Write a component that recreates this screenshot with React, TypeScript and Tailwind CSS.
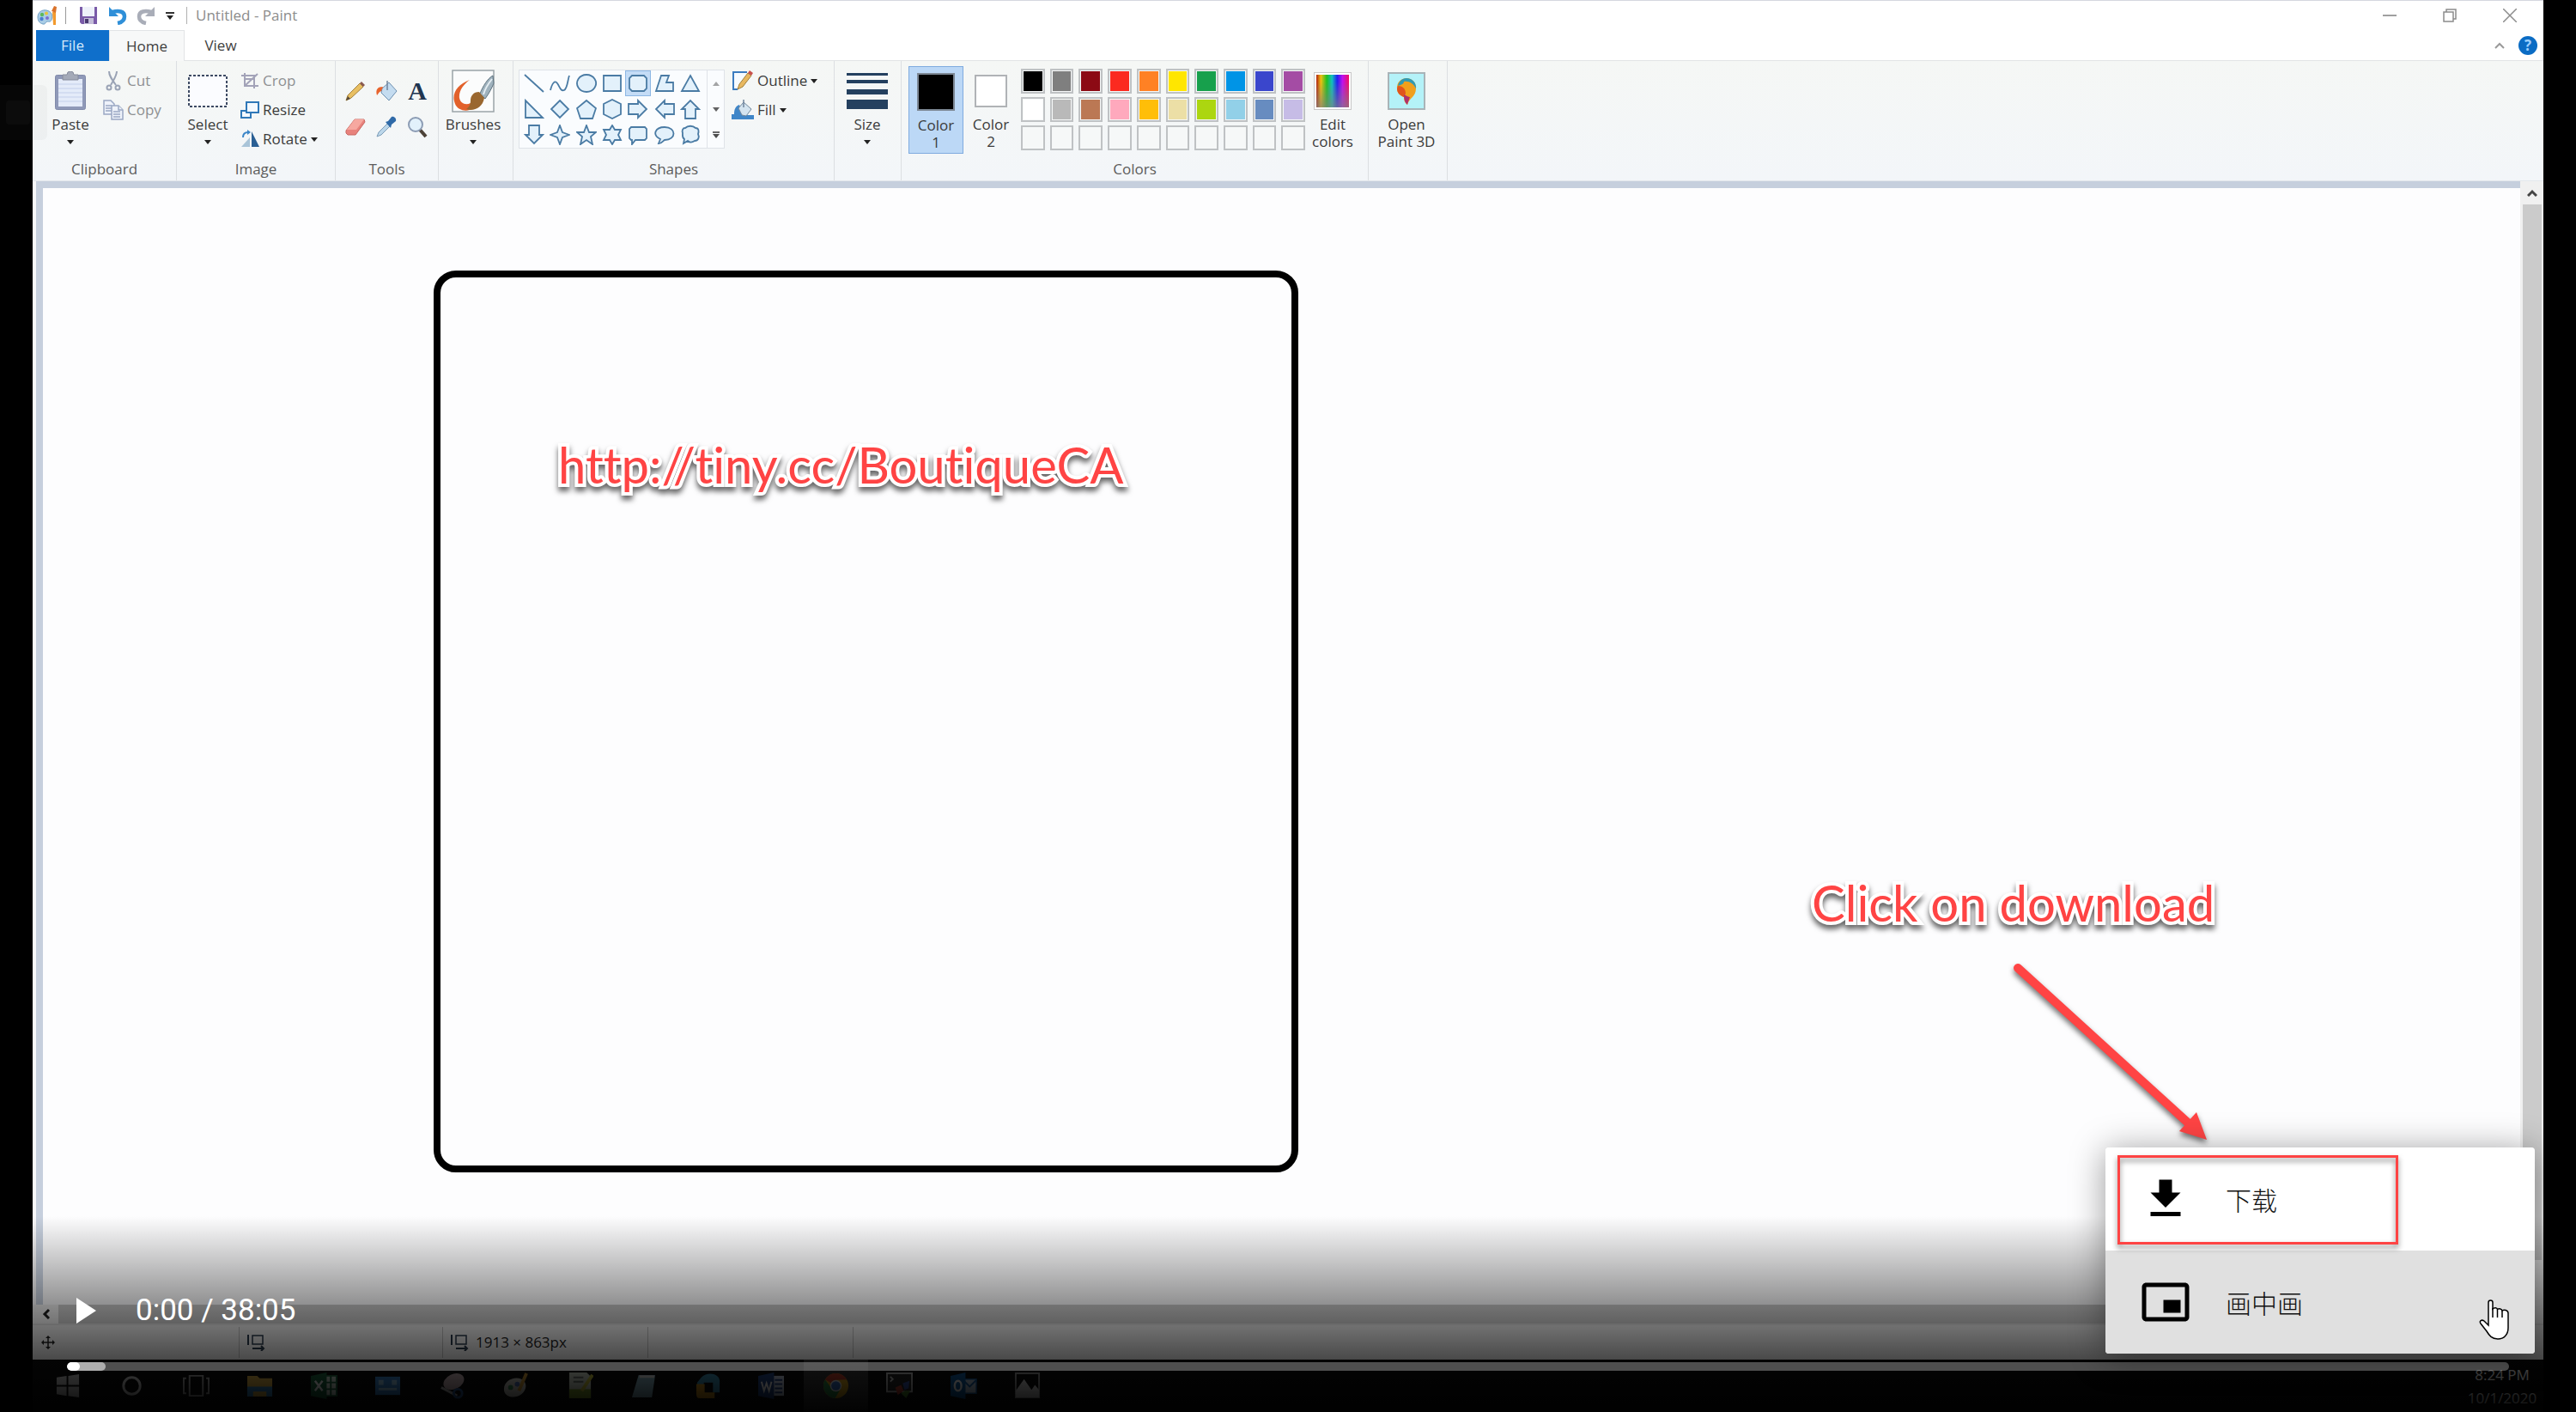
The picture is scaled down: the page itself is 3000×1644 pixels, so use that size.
import type { ReactNode } from "react";

const uiFont = 'font-["Open_Sans","Noto_Sans",sans-serif]';

/* ---------- small helpers ---------- */

function Caret() {
  return (
    <svg viewBox="0 0 8 5" className="h-[5px] w-2 shrink-0" aria-hidden="true">
      <path d="M0 0h8L4 5z" fill="#222" />
    </svg>
  );
}

function Group({ label, className, inset = "", children }: { label?: string; className: string; inset?: string; children: ReactNode }) {
  return (
    <section aria-label={label} className={`flex shrink-0 flex-col border-r border-[#dcdfe2] pt-1.5 ${className}`}>
      <div className={`flex h-[102px] items-start ${inset}`}>{children}</div>
      <div className="mt-1.5 text-center text-[17px] leading-6 text-[#5c5c5c]">{label}</div>
    </section>
  );
}

function BigButton({
  icon,
  label,
  second,
  className = "",
}: {
  icon: ReactNode;
  label: string;
  second?: string;
  className?: string;
}) {
  return (
    <button type="button" className={`flex h-[102px] flex-col items-center text-[17px] leading-5 text-[#3b3b3b] ${className}`}>
      <span className="flex h-[58px] items-center justify-center">{icon}</span>
      <span>{label}</span>
      {second ? <span className="whitespace-nowrap">{second}</span> : <span className="flex h-5 items-center"><Caret /></span>}
    </button>
  );
}

function SmallButton({ icon, label, muted, caret }: { icon: ReactNode; label: string; muted?: boolean; caret?: boolean }) {
  return (
    <button
      type="button"
      className={`flex h-[34px] items-center gap-1 text-[17px] leading-5 ${muted ? "text-[#8e9092]" : "text-[#3b3b3b]"}`}
    >
      {icon}
      <span>{label}</span>
      {caret && <Caret />}
    </button>
  );
}

/* ---------- title bar icons ---------- */

function PaintLogo() {
  return (
    <svg viewBox="0 0 26 26" className="size-[26px]" aria-hidden="true">
      <path d="M2 15c0-6 5-9 10-8 6 1 8 6 6 11-1 3-3 2-5 2s-2 4-5 3c-4-1-6-4-6-8z" fill="#a9cde6" stroke="#6f9fc4" />
      <circle cx="7" cy="12" r="2.2" fill="#5cb85c" />
      <circle cx="12" cy="10.500" r="2" fill="#e8c33c" />
      <circle cx="6.500" cy="17" r="2.200" fill="#4a7fd0" />
      <circle cx="13" cy="16" r="2" fill="#7c6fd0" />
      <path d="M19 9h4v15h-3z" fill="#f29a2e" />
      <path d="M18 8l3-6 3 1-1 7z" fill="#d9722a" />
    </svg>
  );
}

function SaveIcon() {
  return (
    <svg viewBox="0 0 22 22" className="size-[22px]" aria-hidden="true">
      <path d="M1 1h20v20H3l-2-2z" fill="#7a5ba8" />
      <path d="M4 1h14v11H4z" fill="#eef1fa" />
      <path d="M6 14h11v7H6z" fill="#c3bcd8" />
      <path d="M7 15h4v5H7z" fill="#4a3a70" />
    </svg>
  );
}

function UndoIcon({ color, flip }: { color: string; flip?: boolean }) {
  return (
    <svg viewBox="0 0 22 22" className="size-[22px]" aria-hidden="true">
      <g transform={flip ? "matrix(-1 0 0 1 22 0)" : undefined} fill="none" stroke={color}>
        <path d="M5 7c7-2 14-1 14 5 0 4-3 7-8 8" strokeWidth="4.500" />
        <path d="M1 1v11h11z" fill={color} stroke="none" />
      </g>
    </svg>
  );
}

/* ---------- ribbon icons ---------- */

function PasteIcon() {
  return (
    <svg viewBox="0 0 38 46" className="h-[46px] w-[38px]" aria-hidden="true">
      <rect x="1.500" y="4.500" width="35" height="40" rx="2" fill="#8f99b8" stroke="#808aaa" />
      <rect x="5" y="9" width="28" height="32" fill="#e4ebf9" />
      <path d="M5 15h28M5 20h28M5 25h28M5 30h28M5 35h28" stroke="#c3cfea" />
      <path d="M10 4h5a4 4 0 0 1 8 0h5v6H10z" fill="#a4aab8" stroke="#868c9c" />
    </svg>
  );
}

function CutIcon() {
  return (
    <svg viewBox="0 0 24 24" className="size-6" fill="none" stroke="#9aa3b5" strokeWidth="2" aria-hidden="true">
      <path d="M7 1c0 5 3 9 8 16M16 1c0 5-3 9-7 16" />
      <circle cx="7" cy="20" r="2.500" />
      <circle cx="17" cy="20" r="2.500" />
    </svg>
  );
}

function CopyIcon() {
  return (
    <svg viewBox="0 0 24 24" className="size-6" fill="#eef2fa" stroke="#9aa8c4" strokeWidth="1.500" aria-hidden="true">
      <path d="M1 1h8l4 4v12H1z" />
      <path d="M3 7h7M3 10h7M3 13h7" />
      <path d="M10 7h8l5 5v11H10z" />
      <path d="M12 14h8M12 17h8M12 20h8M18 7v5h5" />
    </svg>
  );
}

function SelectIcon() {
  return (
    <svg viewBox="0 0 48 40" className="h-10 w-12" aria-hidden="true">
      <rect x="2" y="2" width="44" height="36" fill="#fbfcff" stroke="#3d4a63" strokeWidth="2" strokeDasharray="3 2" />
    </svg>
  );
}

function CropIcon() {
  return (
    <svg viewBox="0 0 22 22" className="size-[22px]" fill="none" stroke="#a3a3b8" strokeWidth="2" aria-hidden="true">
      <path d="M1 5h17M5 9h11M5 2v15h16M5 17L20 3M16 5v15" />
    </svg>
  );
}

function ResizeIcon() {
  return (
    <svg viewBox="0 0 22 22" className="size-[22px]" fill="#f4f9ff" stroke="#2f78b8" strokeWidth="2" aria-hidden="true">
      <path d="M1 12h11v8H1z" />
      <path d="M7 2h14v12H7z" />
    </svg>
  );
}

function RotateIcon() {
  return (
    <svg viewBox="0 0 22 22" className="size-[22px]" aria-hidden="true">
      <path d="M13 2v18h9z" fill="#2a5f94" />
      <path d="M11 9v11H1z" fill="#a9c4d8" />
      <path d="M3 9c0-4 2-6 6-6" fill="none" stroke="#3b86c8" strokeWidth="2" />
      <path d="M8 0l4 3-4 3z" fill="#3b86c8" />
    </svg>
  );
}

function PencilIcon() {
  return (
    <svg viewBox="0 0 26 26" className="size-[26px]" aria-hidden="true">
      <path d="M2 24l2-6L18 4l4 4L8 21z" fill="#e8bf62" stroke="#a4813e" />
      <path d="M18 4l2-2 4 4-2 2z" fill="#8a5a50" />
      <path d="M2 24l2-5 3 3z" fill="#574a3a" />
    </svg>
  );
}

function BucketIcon() {
  return (
    <svg viewBox="0 0 26 26" className="size-[26px]" aria-hidden="true">
      <path d="M8 10l8-7 9 10-9 11-9-9z" fill="#c4dcf0" stroke="#6c8fb0" />
      <path d="M14 1v11" stroke="#70859c" strokeWidth="1.500" />
      <path d="M9 8c-6 0-9 3-7 10 2-2 2-4 5-5z" fill="#e8632c" />
    </svg>
  );
}

function LetterIcon() {
  return <span className='w-[26px] text-center font-["Liberation_Serif",serif] text-[30px] leading-[26px] font-bold text-[#1f3550]'>A</span>;
}

function EraserIcon() {
  return (
    <svg viewBox="0 0 26 26" className="size-[26px]" aria-hidden="true">
      <path d="M2 17L12 4h11l1 3-11 15H4l-2-2z" fill="#e8827c" stroke="#c86862" />
      <path d="M12 4h11l-9 12H3z" fill="#f6a8a0" />
    </svg>
  );
}

function PickerIcon() {
  return (
    <svg viewBox="0 0 26 26" className="size-[26px]" aria-hidden="true">
      <path d="M2 24l2-5L14 9l3 3L7 22z" fill="#bcd7ea" stroke="#7d9db8" />
      <path d="M12 7l3-1 4-5c3-1 6 2 5 5l-5 4-1 4z" fill="#2f6aa8" />
    </svg>
  );
}

function MagnifierIcon() {
  return (
    <svg viewBox="0 0 26 26" className="size-[26px]" aria-hidden="true">
      <path d="M16 16l7 8" stroke="#4c4238" strokeWidth="4" />
      <circle cx="11" cy="10" r="8" fill="#e2f1fb" stroke="#8c9cb4" strokeWidth="2" />
    </svg>
  );
}

function BrushesIcon() {
  return (
    <svg viewBox="0 0 50 50" className="size-[50px]" aria-hidden="true">
      <rect x="1" y="1" width="48" height="48" fill="#fbfcfc" stroke="#9aa4a8" strokeWidth="1.500" />
      <path d="M21 12C7 17-1 28 4 40c3 8 15 10 20 5l-2-6c-6 3-12 0-13-6C8 25 14 17 21 12z" fill="#e2612b" />
      <path d="M48 7c-6 3-12 13-15 21l6 6c5-7 8-13 10-18z" fill="#9fb2bd" stroke="#5f7480" />
      <path d="M32 26c-7 0-10 5-10 10s-2 8-5 10c8 3 19-1 21-13z" fill="#9a672f" />
      <path d="M47 11c-4 5-8 11-10 18" stroke="#e4edf2" strokeWidth="2" fill="none" />
    </svg>
  );
}

const shapes: { name: string; d: string }[] = [
  { name: "Line", d: "M1 2L23 22" },
  { name: "Curve", d: "M1 20C3 12 6 8 9 12s4 10 8 8S21 8 23 3" },
  { name: "Oval", d: "M12 2a11 10 0 1 0 .1 0z" },
  { name: "Rectangle", d: "M2 3h20v18H2z" },
  { name: "Rounded rectangle", d: "M5 3h14l3 3v12l-3 3H5l-3-3V6z" },
  { name: "Polygon", d: "M8 3h9l-3 8h8v10H2z" },
  { name: "Triangle", d: "M12 3l10 18H2z" },
  { name: "Right triangle", d: "M2 2v20h20z" },
  { name: "Diamond", d: "M12 2l10 10-10 10L2 12z" },
  { name: "Pentagon", d: "M12 2l11 9-4 12H5L1 11z" },
  { name: "Hexagon", d: "M12 1l10 5v12l-10 5L2 18V6z" },
  { name: "Right arrow", d: "M1 6h11V2l10 10-10 10v-4H1z" },
  { name: "Left arrow", d: "M23 6H12V2L2 12l10 10v-4h11z" },
  { name: "Up arrow", d: "M6 23V12H2L12 2l10 10h-4v11z" },
  { name: "Down arrow", d: "M6 1v11H2l10 10 10-10h-4V1z" },
  { name: "Four-point star", d: "M12 1l3 8 8 3-8 3-3 8-3-8-8-3 8-3z" },
  { name: "Five-point star", d: "M12 1l3 8h8l-6 5 2 9-7-5-7 5 2-9-6-5h8z" },
  { name: "Six-point star", d: "M12 1l3 5h7l-3 6 3 6h-7l-3 5-3-5H2l3-6-3-6h7z" },
  { name: "Rounded callout", d: "M4 3h16l2 2v11l-2 2H9l-4 5v-5H4l-2-2V5z" },
  { name: "Oval callout", d: "M12 3c14 0 14 15 0 15-1 0-3 4-7 4l2-5C-3 12 1 3 12 3z" },
  { name: "Cloud callout", d: "M6 4c3-3 9-3 12 0 4 0 4 4 3 7 2 4 0 8-4 8-3 2-6 2-8 0l-5 3 1-5c-3-2-2-5-2-7-1-3 0-6 3-6z" },
];

function ShapesGallery() {
  return (
    <div className="mt-1 flex h-[92px] border border-[#dfe3e8] bg-[#fafcfe]">
      <div className="grid w-[218px] grid-cols-7 grid-rows-3 pr-1 pl-0.5">
        {shapes.map((s, i) => (
          <button
            key={s.name}
            type="button"
            aria-label={s.name}
            className={`flex items-center justify-center border ${i === 4 ? "border-[#8db7e4] bg-[#c4dcf6]" : "border-transparent"}`}
          >
            <svg viewBox="0 0 24 24" className="size-[24px]" fill={i < 2 ? "none" : "#e3f1fb"} stroke="#4a7ba4" strokeWidth="1.800">
              <path d={s.d} />
            </svg>
          </button>
        ))}
      </div>
      <div className="grid w-5 grid-rows-3 border-l border-[#dfe3e8]">
        <button type="button" aria-label="Scroll shapes up" className="flex items-center justify-center opacity-40">
          <svg viewBox="0 0 8 5" className="h-[5px] w-2"><path d="M0 5h8L4 0z" fill="#222" /></svg>
        </button>
        <button type="button" aria-label="Scroll shapes down" className="flex items-center justify-center opacity-70">
          <Caret />
        </button>
        <button type="button" aria-label="More shapes" className="flex flex-col items-center justify-center gap-px opacity-80">
          <span className="h-0.5 w-2 bg-[#444]" />
          <Caret />
        </button>
      </div>
    </div>
  );
}

function OutlineIcon() {
  return (
    <svg viewBox="0 0 26 26" className="size-[26px]" aria-hidden="true">
      <path d="M18 3H2v20h5" fill="#f7fbff" stroke="#3c7cc0" strokeWidth="2" />
      <path d="M7 23l2-6L19 4l4 3L13 20z" fill="#e8b860" stroke="#a0803c" />
      <path d="M19 4l2-3 4 3-2 3z" fill="#c8504c" />
    </svg>
  );
}

function FillIcon() {
  return (
    <svg viewBox="0 0 26 26" className="size-[26px]" aria-hidden="true">
      <path d="M9 7c-5 2-6 6-6 11H0v6h26v-5H14z" fill="#3f86c8" />
      <path d="M8 11l6-7 9 8-6 8-5-1z" fill="#d4e4f0" stroke="#70879c" />
      <path d="M14 1v9" stroke="#70859c" strokeWidth="1.500" />
    </svg>
  );
}

const palette = [
  "#000000", "#7f7f7f", "#8c0a14", "#fb2a20", "#ff8124", "#ffe600", "#17a04c", "#0094e6", "#3a46cc", "#a44ca4",
  "#ffffff", "#b9b9b9", "#bb7854", "#ffa9bd", "#ffbe08", "#ecdfa6", "#acd610", "#92d0e8", "#678cc0", "#c6bce6",
];

function Palette() {
  return (
    <div className="mt-[3px] grid w-[331px] grid-cols-10 gap-x-1.5 gap-y-1">
      {Array.from({ length: 30 }, (_, i) => (
        <button
          key={i}
          type="button"
          aria-label={`Color swatch ${i + 1}`}
          className="h-[29px] border-2 border-[#bfc2c4] bg-[#f6f8f8] p-px"
        >
          {palette[i] && <span className="block size-full" style={{ backgroundColor: palette[i] }} />}
        </button>
      ))}
    </div>
  );
}

function RainbowIcon() {
  return (
    <span className="block size-[44px] border border-[#c8c8c8] bg-white p-0.5">
      <span className="block size-full bg-[linear-gradient(to_top,rgba(128,128,128,.7),transparent_80%),linear-gradient(to_right,#b02010,#f0c010_14%,#20c020_32%,#10c0c0_48%,#2020f0_64%,#c010f0_80%,#f01060)]" />
    </span>
  );
}

function Paint3DIcon() {
  return (
    <svg viewBox="0 0 44 44" className="size-[44px]" aria-hidden="true">
      <rect x="1" y="1" width="42" height="42" fill="#b4f2f8" stroke="#a9b4b8" strokeWidth="2" />
      <path d="M22 7a11 11 0 0 1 11 12c0 10-8 11-10 19-3-2-4-5-4-9-5-2-8-5-8-10A11 11 0 0 1 22 7z" fill="#f0a01c" />
      <path d="M22 7a11 11 0 0 1 11 12c-3-6-8-9-14-8 0 3-4 4-7 5 1-5 5-9 10-9z" fill="#2f9ab4" />
      <path d="M12 16c5 0 9 3 9 9l-2 4c-5-2-8-5-8-10z" fill="#e0541e" />
      <path d="M19 26c3 2 6 3 7 3-1 3-2 5-3 9-3-3-4-6-4-12z" fill="#b0306c" />
    </svg>
  );
}

/* ---------- Paint window ---------- */

function TitleBar() {
  return (
    <header className="flex h-[34px] shrink-0 items-center bg-white pl-1 text-[#8c8c8c]">
      <PaintLogo />
      <span className="mr-[15px] ml-2 h-5 w-px bg-[#9a9a9a]" />
      <button type="button" aria-label="Save"><SaveIcon /></button>
      <button type="button" aria-label="Undo" className="ml-3"><UndoIcon color="#2f8fd8" /></button>
      <button type="button" aria-label="Redo" className="ml-[11px]"><UndoIcon color="#a9adb8" flip /></button>
      <button type="button" aria-label="Customize toolbar" className="ml-3 flex flex-col items-center gap-0.5">
        <span className="h-0.5 w-2.5 bg-[#333]" />
        <Caret />
      </button>
      <span className="mr-2.5 ml-3.5 h-5 w-px bg-[#b0b0b0]" />
      <h1 className="text-[17px] leading-6">Untitled - Paint</h1>
      <div className="ml-auto flex items-center gap-[54px] pr-[31px]">
        <button type="button" aria-label="Minimize" className="h-0.5 w-4 bg-[#a0a0a0]" />
        <button type="button" aria-label="Restore">
          <svg viewBox="0 0 16 16" className="size-4" fill="none" stroke="#8c8c8c" strokeWidth="1.500">
            <path d="M1 4h11v11H1zM4 4V1h11v11h-3" />
          </svg>
        </button>
        <button type="button" aria-label="Close">
          <svg viewBox="0 0 16 16" className="size-4" stroke="#8c8c8c" strokeWidth="1.500">
            <path d="M0 0l16 16M16 0L0 16" />
          </svg>
        </button>
      </div>
    </header>
  );
}

function Tabs() {
  return (
    <nav className="flex h-9 shrink-0 bg-white pl-1 text-[17px] leading-6 text-[#3f3f3f]">
      <button type="button" className="w-[85px] bg-[#0f6fcb] text-[#d6e9fa]">File</button>
      <button type="button" className="w-[88px] border-x border-t border-[#e2e4e6] bg-[#f7f8f8]">Home</button>
      <button type="button" className="w-[84px] border-b border-[#e2e4e6]">View</button>
      <div className="flex grow items-center justify-end gap-4 border-b border-[#e2e4e6] pr-[7px]">
        <button type="button" aria-label="Collapse ribbon">
          <svg viewBox="0 0 12 8" className="h-2 w-3" fill="none" stroke="#9a9a9a" strokeWidth="2"><path d="M1 7l5-5 5 5" /></svg>
        </button>
        <button type="button" aria-label="Help" className="size-[22px] rounded-full bg-[#0b6cc4] text-[17px] leading-[22px] font-bold text-[#9fd0ff]">?</button>
      </div>
    </nav>
  );
}

function Ribbon() {
  return (
    <div className="flex h-[140px] shrink-0 border-b border-[#e3e7ec] bg-linear-to-b from-[#f5f7f5] to-[#f3f6f9]">
      <Group label="Clipboard" className="w-[168px]" inset="pl-4">
        <BigButton className="w-14" icon={<PasteIcon />} label="Paste" />
        <div className="ml-2.5 flex flex-col items-start">
          <SmallButton muted icon={<CutIcon />} label="Cut" />
          <SmallButton muted icon={<CopyIcon />} label="Copy" />
        </div>
      </Group>
      <Group label="Image" className="w-[185px]" inset="pl-2">
        <BigButton className="w-14" icon={<SelectIcon />} label="Select" />
        <div className="ml-2.5 flex flex-col items-start">
          <SmallButton muted icon={<CropIcon />} label="Crop" />
          <SmallButton icon={<ResizeIcon />} label="Resize" />
          <SmallButton caret icon={<RotateIcon />} label="Rotate" />
        </div>
      </Group>
      <Group label="Tools" className="w-[120px]" inset="pl-2.5">
        <div className="grid grid-cols-3 gap-x-2.5 gap-y-4 pt-4">
          <button type="button" aria-label="Pencil"><PencilIcon /></button>
          <button type="button" aria-label="Fill with color"><BucketIcon /></button>
          <button type="button" aria-label="Text" className="flex"><LetterIcon /></button>
          <button type="button" aria-label="Eraser"><EraserIcon /></button>
          <button type="button" aria-label="Color picker"><PickerIcon /></button>
          <button type="button" aria-label="Magnifier"><MagnifierIcon /></button>
        </div>
      </Group>
      <Group className="w-[87px]" inset="pl-0.5">
        <BigButton className="w-[76px]" icon={<BrushesIcon />} label="Brushes" />
      </Group>
      <Group label="Shapes" className="w-[374px]" inset="pl-1.5">
        <ShapesGallery />
        <div className="ml-2 flex flex-col items-start">
          <SmallButton caret icon={<OutlineIcon />} label="Outline" />
          <SmallButton caret icon={<FillIcon />} label="Fill" />
        </div>
      </Group>
      <Group className="w-[78px]">
        <BigButton
          className="w-[76px]"
          icon={
            <svg viewBox="0 0 48 42" className="h-[42px] w-12" fill="#24405f" aria-hidden="true">
              <path d="M0 0h48v3H0zM0 8h48v4H0zM0 19h48v6H0zM0 31h48v11H0z" />
            </svg>
          }
          label="Size"
        />
      </Group>
      <Group label="Colors" className="w-[544px]" inset="pl-2">
        <BigButton
          className="w-16 border border-[#7fabdf] bg-[#bcd8f6]"
          icon={<span className="size-[44px] border-2 border-[#7d8894] bg-black" />}
          label="Color"
          second="1"
        />
        <BigButton
          className="w-16"
          icon={<span className="h-[38px] w-[38px] border-2 border-[#b0b3b6] bg-white" />}
          label="Color"
          second="2"
        />
        <div className="ml-[3px]"><Palette /></div>
        <BigButton className="ml-0.5 w-[60px]" icon={<RainbowIcon />} label="Edit" second="colors" />
      </Group>
      <Group className="w-[92px]" inset="pl-0.5">
        <BigButton className="w-[84px]" icon={<Paint3DIcon />} label="Open" second="Paint 3D" />
      </Group>
    </div>
  );
}

const captionText =
  'absolute font-["Lato",sans-serif] text-[58px] leading-[70px] whitespace-nowrap text-[#ff4444] [font-variant-ligatures:none] [paint-order:stroke_fill] [-webkit-text-stroke:8px_white] drop-shadow-[0_5px_3px_rgba(0,0,0,.6)]';

function Canvas() {
  return (
    <div className="flex min-h-0 grow bg-[#f0f0f0]">
      <div className="relative grow border-t-[8px] border-l-[8px] border-[#c6cfdd] bg-[#fdfdfe]">
        <div className="absolute top-24 left-[455px] h-[1050px] w-[1007px] rounded-[26px] border-[8px] border-black" />
        <p className={`${captionText} top-[287px] left-[600px]`}>http://tiny.cc/BoutiqueCA</p>
        <p className={`${captionText} top-[797px] left-[2060px]`}>Click on download</p>
        <svg viewBox="0 0 240 220" className="absolute top-[898px] left-[2290px] h-[220px] w-[240px] drop-shadow-[0_4px_3px_rgba(0,0,0,.55)]" aria-hidden="true">
          <path d="M10 10L210 192" stroke="#ff4444" strokeWidth="10" strokeLinecap="round" />
          <path d="M230 210l-12-32-20 22z" fill="#ff4444" />
        </svg>
      </div>
      <div className="flex w-[27px] shrink-0 flex-col items-center pb-[52px]">
        <button type="button" aria-label="Scroll up" className="flex h-[27px] items-center">
          <svg viewBox="0 0 12 9" className="h-[9px] w-3" fill="none" stroke="#444" strokeWidth="3"><path d="M1 8l5-5 5 5" /></svg>
        </button>
        <div className="w-[22px] grow bg-[#cbcbcb]" />
      </div>
    </div>
  );
}

function SizeIcon() {
  return (
    <svg viewBox="0 0 22 20" className="h-5 w-[22px]" fill="none" stroke="#2a3a4c" strokeWidth="2" aria-hidden="true">
      <path d="M2 1v12" />
      <path d="M7 2h12v10H7z" strokeWidth="1.500" />
      <path d="M7 17h13M17 14l3 3-3 3" />
    </svg>
  );
}

function StatusBar() {
  return (
    <footer className="shrink-0 bg-[#f0f0f0] text-[#1c1c1c]">
      <div className="flex h-[22px]">
        <button type="button" aria-label="Scroll left" className="flex w-[30px] items-center justify-center">
          <svg viewBox="0 0 9 12" className="h-3 w-[9px]" fill="none" stroke="#222" strokeWidth="3"><path d="M8 1L3 6l5 5" /></svg>
        </button>
        <div className="grow bg-[#cacaca]" />
        <div className="w-[27px]" />
      </div>
      <div className="flex h-[42px] items-center border-t-2 border-[#e0e0e0] text-[17px] leading-6">
        <div className="flex h-9 w-[241px] items-center border-r border-[#bfbfbf] pl-2.5">
          <svg viewBox="0 0 16 16" className="size-4" stroke="#222" strokeWidth="1.500" fill="#222" aria-hidden="true">
            <path d="M8 1v14M1 8h14" />
            <path d="M8 0l3 3H5zM8 16l3-3H5zM0 8l3-3v6zM16 8l-3-3v6z" stroke="none" />
          </svg>
        </div>
        <div className="flex h-9 w-[237px] items-center border-r border-[#bfbfbf] pl-2"><SizeIcon /></div>
        <div className="flex h-9 w-[239px] items-center gap-2 border-r border-[#bfbfbf] pl-2">
          <SizeIcon />
          <span>1913 × 863px</span>
        </div>
        <div className="h-9 w-[239px] border-r border-[#bfbfbf]" />
      </div>
    </footer>
  );
}

/* ---------- Windows taskbar ---------- */

const taskIcons: { name: string; art: ReactNode }[] = [
  { name: "Start", art: <path d="M2 6l12-2v11H2zM16 4l13-2v13H16zM2 17h12v11L2 26zM16 17h13v13l-13-2z" fill="#c8c8c8" /> },
  { name: "Search", art: <ellipse cx="16" cy="16" rx="10" ry="10" fill="none" stroke="#d0d0d0" strokeWidth="3" /> },
  { name: "Task view", art: <path d="M8 4h16v24H8zM4 7H1v18h3M28 7h3v18h-3" fill="none" stroke="#a8a8a8" strokeWidth="2" /> },
  { name: "File Explorer", art: <><path d="M1 4h12l3 3h15v22H1z" fill="#e6b848" /><path d="M1 29V17h30v12h-7v-6H8v6z" fill="#3a8cc8" /></> },
  { name: "Excel", art: <><path d="M16 4h15v24H16z" fill="#d8e8dc" stroke="#1d6b42" strokeWidth="2" /><path d="M16 12h15M16 20h15M24 4v24" stroke="#1d6b42" strokeWidth="2" /><path d="M0 4l19-4v32L0 28z" fill="#1d6b42" /><path d="M5 10l9 12M14 10L5 22" stroke="#fff" strokeWidth="2.500" /></> },
  { name: "Control Panel", art: <><rect x="1" y="5" width="30" height="22" fill="#3c8cd8" /><path d="M5 9h6v6H5zM21 9h6v6h-6z" fill="#9cd0ee" /><path d="M5 20h22" stroke="#9cd0ee" strokeWidth="3" /></> },
  { name: "Snipping Tool", art: <><ellipse cx="18" cy="11" rx="13" ry="9" transform="rotate(-25 18 11)" fill="#d0b8bc" /><path d="M3 18L22 28" stroke="#b8b8b8" strokeWidth="3" /><circle cx="23" cy="25" r="5" fill="none" stroke="#2c5c9c" strokeWidth="3" /></> },
  { name: "Paint", art: <><path d="M2 20C2 10 14 4 23 8c8 4 6 14 0 18-8 6-21 4-21-6z" fill="#d0d0c8" /><circle cx="10" cy="18" r="3" fill="#3c8c58" /><circle cx="18" cy="14" r="3" fill="#5070b8" /><path d="M20 22L29 1" stroke="#d8a038" strokeWidth="4" /></> },
  { name: "Notepad++", art: <><path d="M3 0h21l5 5v26H3z" fill="#d8e0d0" /><path d="M3 20h26v11H3z" fill="#8cb030" /><path d="M8 6h12M8 11h12" stroke="#707870" strokeWidth="2" /><path d="M18 22L31 3" stroke="#d8d040" strokeWidth="4" /></> },
  { name: "Notepad", art: <><path d="M10 3h20l-4 27H2z" fill="#8cb8c8" /><path d="M11 5h18" stroke="#e8e8e8" strokeWidth="3" /></> },
  { name: "VMware", art: <><path d="M8 6c8-8 22-4 22 4v14h-8V12H11v12H3V12z" fill="#3c94b8" /><path d="M2 14h10v10h12v7H6c-4 0-4-4-4-7z" fill="#d8981c" /></> },
  { name: "Word", art: <><path d="M16 4h15v24H16z" fill="#c8d4e8" /><path d="M20 9h9M20 14h9M20 19h9M20 24h9" stroke="#28488c" strokeWidth="2" /><path d="M0 4l19-4v32L0 28z" fill="#24488c" /><path d="M4 11l3 11 3-9 3 9 3-11" fill="none" stroke="#fff" strokeWidth="2" /></> },
  { name: "Chrome", art: <><circle cx="16" cy="16" r="15" fill="#dca81c" /><path d="M16 16L3 8.500A15 15 0 0 1 29 8.500L16 9z" fill="#c8402c" /><path d="M3 8.500A15 15 0 0 0 15 31l7-12-12-1z" fill="#2c8c48" /><circle cx="16" cy="16" r="7" fill="#e8e8e8" /><circle cx="16" cy="16" r="5.500" fill="#3870c8" /></> },
  { name: "Remote tool", art: <><rect x="1" y="1" width="30" height="22" fill="#282828" stroke="#c0c0c0" strokeWidth="2" /><path d="M5 5l3 3-3 3" stroke="#c8c8c8" strokeWidth="2" fill="none" /><path d="M11 18l7-3 3 7-7 5z" fill="#c04030" /><path d="M20 13l8-3-1 9-5 2z" fill="#3858b0" /><path d="M18 25l5-3 6 0-5 9z" fill="#50902c" /></> },
  { name: "Outlook", art: <><path d="M15 8h16v17H15z" fill="#b8cce0" stroke="#1860a8" strokeWidth="1.500" /><path d="M15 9l8 8 8-8" fill="none" stroke="#1860a8" strokeWidth="2" /><path d="M0 4l18-4v32L0 28z" fill="#1060a8" /><ellipse cx="9" cy="16" rx="4" ry="6" fill="none" stroke="#fff" strokeWidth="2.500" /></> },
  { name: "Photos", art: <><rect x="2" y="1" width="28" height="29" fill="none" stroke="#989898" strokeWidth="2" /><path d="M2 22L12 8l9 13 4-6 5 6v9H2z" fill="#d8d8d8" /></> },
];

function Taskbar() {
  return (
    <div className="flex h-[61px] shrink-0 items-center bg-[#0c0c0c] pl-1">
      <ul className="grid h-full w-[1192px] grid-cols-[repeat(16,minmax(0,1fr))]">
        {taskIcons.map((t) => (
          <li key={t.name} className={t.name === "Chrome" ? "bg-[#383838]" : ""}>
            <button type="button" aria-label={t.name} className="flex size-full items-center justify-center">
              <svg viewBox="0 0 32 32" className="size-[31px]">{t.art}</svg>
            </button>
          </li>
        ))}
      </ul>
      <div className="ml-auto w-24 text-center text-[17px] leading-[27px] text-white">
        <p>8:24 PM</p>
        <p>10/1/2020</p>
      </div>
    </div>
  );
}

/* ---------- video player overlay ---------- */

function VideoControls() {
  return (
    <div className="absolute inset-x-0 bottom-0 flex h-[228px] flex-col justify-end bg-linear-to-b from-transparent to-black/95 px-[78px] pb-12">
      <div className="flex h-[60px] items-center gap-[46px] pl-[11px]">
        <button type="button" aria-label="Play">
          <svg viewBox="0 0 23 30" className="h-[30px] w-[23px]" fill="#fff"><path d="M0 0l23 15L0 30z" /></svg>
        </button>
        <time className='font-["Roboto",sans-serif] text-[35px] leading-10 text-white'>0:00 / 38:05</time>
      </div>
      <div className="relative mt-[30px] h-2.5 overflow-hidden rounded-full bg-white/30">
        <div className="h-full w-[45px] rounded-full bg-[#adadad]">
          <div className="h-full w-[15px] rounded-full bg-white" />
        </div>
        <input type="range" aria-label="Seek" min={0} max={2285} defaultValue={0} className="absolute inset-0 size-full opacity-0" />
      </div>
    </div>
  );
}

function OverflowMenu() {
  const item = 'flex h-[120px] w-full items-center gap-10 pl-10 text-left font-["Noto_Sans_CJK_SC",sans-serif] text-[30px] leading-10 font-light text-[#111]';
  return (
    <div className="absolute right-12 bottom-[68px] w-[500px] rounded-[4px] shadow-[0_4px_40px_rgba(0,0,0,.4)]">
      <div className="overflow-hidden rounded-[4px] bg-white">
        <button type="button" className={item}>
          <svg viewBox="0 0 24 24" className="size-[60px]" aria-hidden="true"><path d="M19 9h-4V3H9v6H5l7 7 7-7zM5 18v2h14v-2H5z" /></svg>
          下载
        </button>
        <button type="button" className={`${item} bg-[#e0e0e0]`}>
          <svg viewBox="0 0 24 24" className="size-[60px]" aria-hidden="true">
            <path d="M19 11h-8v6h8v-6zm4 8V4.980C23 3.880 22.100 3 21 3H3c-1.100 0-2 .880-2 1.980V19c0 1.100.9 2 2 2h18c1.100 0 2-.9 2-2zm-2 .020H3V4.970h18v14.050z" />
          </svg>
          画中画
        </button>
      </div>
      <div className="pointer-events-none absolute top-[9px] left-3.5 h-[104px] w-[327px] border-[3px] border-[#ff4444] drop-shadow-[0_4px_3px_rgba(0,0,0,.5)]" />
      <svg viewBox="0 0 36 47" className="pointer-events-none absolute right-[29px] bottom-4 h-[47px] w-9" aria-hidden="true">
        <path
          d="M11 3.500C11 2 12 1 13.500 1S16 2 16 3.500V11c2-2 5-1.500 5.500.500 2-1.500 5-.5 5.500 1.500 2-1.500 7-1 7 3v17c0 8-5 13-12 13S12 42 9 37L2 28c-2-3 1-5 4-3l5 5z"
          fill="#fff"
          stroke="#000"
          strokeWidth="1.500"
        />
        <path d="M16 10v11M21.500 12v9M27 13v8" stroke="#000" strokeWidth="1.500" />
      </svg>
    </div>
  );
}

export default function App() {
  return (
    <div className={`relative flex h-screen overflow-hidden bg-black ${uiFont}`}>
      <main className="mx-[38px] flex min-w-0 grow flex-col border-t border-[#d5d7df] bg-[#f8f8fa]">
        <TitleBar />
        <Tabs />
        <Ribbon />
        <div className="flex min-h-0 grow flex-col pl-1">
          <Canvas />
        </div>
        <StatusBar />
        <Taskbar />
      </main>
      <VideoControls />
      <div className="absolute top-[99px] left-0 flex h-16 w-[55px] items-center justify-end rounded-r-[6px] bg-[#777]/5 pr-5">
        <div className="size-7 rounded-[4px] bg-[#888]/5" />
      </div>
      <OverflowMenu />
    </div>
  );
}
